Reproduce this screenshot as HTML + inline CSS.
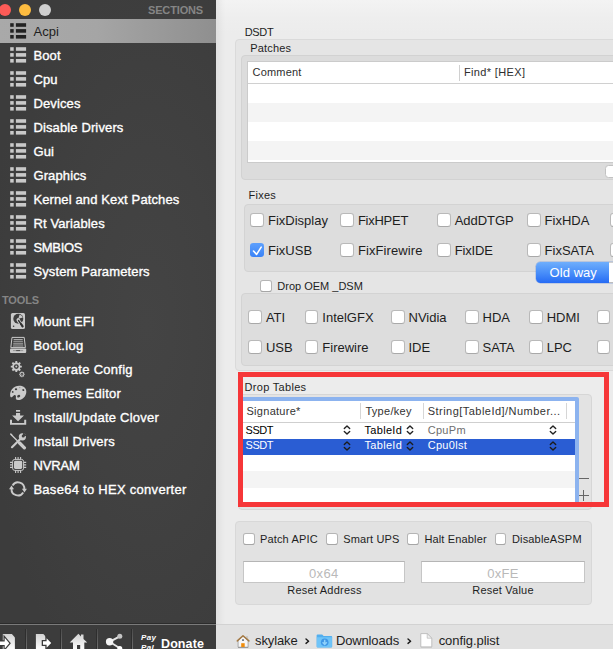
<!DOCTYPE html>
<html>
<head>
<meta charset="utf-8">
<title>Clover Configurator</title>
<style>
*{box-sizing:border-box;margin:0;padding:0}
html,body{width:613px;height:649px;overflow:hidden;background:#ececec;font-family:"Liberation Sans",sans-serif;}
#app{position:relative;width:613px;height:649px;overflow:hidden;background:linear-gradient(#f3f3f3 0px,#eeeeee 18px,#ececec 34px,#ececec 100%);}
.abs{position:absolute}
/* sidebar */
#side{position:absolute;left:0;top:0;width:216px;height:649px;background:radial-gradient(ellipse 75% 60% at 68% 50%,#444 0%,#414141 45%,#3c3c3c 100%);overflow:hidden}
.tl{position:absolute;width:12px;height:12px;border-radius:50%;top:4px}
.hdr{position:absolute;font-weight:bold;font-size:11px;color:#858585;letter-spacing:-0.15px;white-space:nowrap}
.row{position:absolute;left:0;width:216px;height:24px;}
.row .t{position:absolute;left:33.4px;top:1px;line-height:24px;font-size:13px;color:#fff;white-space:nowrap;-webkit-text-stroke:0.35px #fff;letter-spacing:0.13px}
.row.sel{background:linear-gradient(to right,#a9a9a9 0%,#a5a5a5 45%,#8f8f8f 100%)}
.row.sel .t{color:#1e1e1e;-webkit-text-stroke:0;letter-spacing:0.1px}
.li{position:absolute;left:10px;top:4px;width:16px;height:16px}
.ti{position:absolute;left:9px;top:3px;width:18px;height:18px}
/* main */
.box{position:absolute;background:#e4e4e4;border:1px solid #d9d9d9;border-radius:4px}
.cb{position:absolute;width:13.5px;height:13.5px;background:#fff;border:1px solid #b9b9b9;border-bottom-color:#a9a9a9;border-radius:3.2px}
.cb.ck{border:0;background:linear-gradient(#5da0fd,#3b83f7)}
.tx{position:absolute;white-space:nowrap}
.inp{background:#fff;border:1px solid #c6c6c6;border-top-color:#b5b5b5}
.cbs{position:absolute;width:11.5px;height:11.5px;background:#fff;border:1px solid #b5b5b5;border-bottom-color:#a6a6a6;border-radius:2.8px}
</style>
</head>
<body>
<div id="app">

<!-- MAIN -->
<div id="main">
  <div class="tx" style="left:244.7px;top:25.99px;font-size:11px;line-height:13px;color:#1e1e1e;letter-spacing:-0.3px;">DSDT</div>
  <div class="box" style="left:235px;top:39px;width:400px;height:332px;background:#e5e5e5;border-color:#dadada"></div>
  <div class="tx" style="left:250.3px;top:41.69px;font-size:11px;line-height:13px;color:#1e1e1e;letter-spacing:0.15px;">Patches</div>
  <div class="box" style="left:241px;top:55px;width:400px;height:124.5px;background:#dcdcdc;border-color:#d2d2d2"></div>
  <div class="abs" style="left:247px;top:61px;width:400px;height:102px;background:#fff;border:1px solid #cbcbcb;border-right:0"></div>
  <div class="abs" style="left:248px;top:103px;width:400px;height:19px;background:#f4f4f4"></div>
  <div class="abs" style="left:248px;top:141px;width:400px;height:19px;background:#f4f4f4"></div>
  <div class="abs" style="left:248px;top:83px;width:400px;height:1px;background:#d0d0d0"></div>
  <div class="abs" style="left:459px;top:64.5px;width:1px;height:16px;background:#d0d0d0"></div>
  <div class="tx" style="left:252.5px;top:65.89px;font-size:11px;line-height:13px;color:#2e2e2e;letter-spacing:0.2px;">Comment</div>
  <div class="tx" style="left:464px;top:65.89px;font-size:11px;line-height:13px;color:#2e2e2e;letter-spacing:0.35px;">Find* [HEX]</div>
  <div class="abs" style="left:604.5px;top:164.5px;width:30px;height:13px;background:#fff;border:1px solid #c2c2c2;border-radius:3.5px"></div>
  <div class="tx" style="left:248.6px;top:188.69px;font-size:11px;line-height:13px;color:#1e1e1e;letter-spacing:0.25px;">Fixes</div>
  <div class="box" style="left:244px;top:204px;width:400px;height:68px;background:#dddddd;border-color:#d3d3d3"></div>
  <div class="cb" style="left:250px;top:213.2px"></div>
  <div class="cb ck" style="left:250px;top:243.1px"><svg width="13.5" height="13.5" viewBox="0 0 13.5 13.5" style="position:absolute;left:-0.5px;top:-0.5px"><path d="M3.5 8 L6.6 11.4 L11.2 4.1" fill="none" stroke="#fff" stroke-width="1.6" stroke-linecap="round" stroke-linejoin="round"/></svg></div>
  <div class="tx" style="left:268.0px;top:213.20px;font-size:13px;line-height:16px;color:#1e1e1e;">FixDisplay</div>
  <div class="tx" style="left:268.0px;top:243.10px;font-size:13px;line-height:16px;color:#1e1e1e;">FixUSB</div>
  <div class="cb" style="left:340px;top:213.2px"></div>
  <div class="cb" style="left:340px;top:243.1px"></div>
  <div class="tx" style="left:357.9px;top:213.20px;font-size:13px;line-height:16px;color:#1e1e1e;letter-spacing:-0.25px;">FixHPET</div>
  <div class="tx" style="left:357.9px;top:243.10px;font-size:13px;line-height:16px;color:#1e1e1e;letter-spacing:0.1px;">FixFirewire</div>
  <div class="cb" style="left:437.3px;top:213.2px"></div>
  <div class="cb" style="left:437.3px;top:243.1px"></div>
  <div class="tx" style="left:454.7px;top:213.20px;font-size:13px;line-height:16px;color:#1e1e1e;letter-spacing:-0.05px;">AddDTGP</div>
  <div class="tx" style="left:454.7px;top:243.10px;font-size:13px;line-height:16px;color:#1e1e1e;letter-spacing:-0.15px;">FixIDE</div>
  <div class="cb" style="left:527.2px;top:213.2px"></div>
  <div class="cb" style="left:527.2px;top:243.1px"></div>
  <div class="tx" style="left:544.6px;top:213.20px;font-size:13px;line-height:16px;color:#1e1e1e;">FixHDA</div>
  <div class="tx" style="left:544.6px;top:243.10px;font-size:13px;line-height:16px;color:#1e1e1e;">FixSATA</div>
  <div class="cb" style="left:610px;top:213.2px"></div>
  <div class="cb" style="left:610px;top:243.1px"></div>
  <div class="abs" style="left:535.5px;top:262px;width:100px;height:21px;border-radius:4.5px 0 0 4.5px;background:linear-gradient(#6eaefc,#4a8ff9 50%,#266bf4);box-shadow:0 0 0 0.5px rgba(20,80,200,0.35)"></div>
  <div class="abs" style="left:608.5px;top:262px;width:10px;height:21px;background:#fff;border-top:1px solid #cfcfcf;border-bottom:1px solid #bdbdbd"></div>
  <div class="tx" style="left:549.6px;top:264.80px;font-size:13px;line-height:16px;color:#fff;letter-spacing:0.05px;">Old way</div>
  <div class="cbs" style="left:260px;top:280.3px"></div>
  <div class="tx" style="left:277.3px;top:279.69px;font-size:11px;line-height:13px;color:#1e1e1e;">Drop OEM _DSM</div>
  <div class="box" style="left:241px;top:293px;width:400px;height:73px;background:#dddddd;border-color:#d3d3d3"></div>
  <div class="cb" style="left:248.4px;top:310px"></div>
  <div class="cb" style="left:248.4px;top:340px"></div>
  <div class="tx" style="left:265.9px;top:310.30px;font-size:13px;line-height:16px;color:#1e1e1e;">ATI</div>
  <div class="tx" style="left:265.9px;top:340.30px;font-size:13px;line-height:16px;color:#1e1e1e;">USB</div>
  <div class="cb" style="left:304.8px;top:310px"></div>
  <div class="cb" style="left:304.8px;top:340px"></div>
  <div class="tx" style="left:322.3px;top:310.30px;font-size:13px;line-height:16px;color:#1e1e1e;">IntelGFX</div>
  <div class="tx" style="left:322.3px;top:340.30px;font-size:13px;line-height:16px;color:#1e1e1e;">Firewire</div>
  <div class="cb" style="left:391px;top:310px"></div>
  <div class="cb" style="left:391px;top:340px"></div>
  <div class="tx" style="left:408.5px;top:310.30px;font-size:13px;line-height:16px;color:#1e1e1e;">NVidia</div>
  <div class="tx" style="left:408.5px;top:340.30px;font-size:13px;line-height:16px;color:#1e1e1e;">IDE</div>
  <div class="cb" style="left:465px;top:310px"></div>
  <div class="cb" style="left:465px;top:340px"></div>
  <div class="tx" style="left:482.5px;top:310.30px;font-size:13px;line-height:16px;color:#1e1e1e;">HDA</div>
  <div class="tx" style="left:482.5px;top:340.30px;font-size:13px;line-height:16px;color:#1e1e1e;">SATA</div>
  <div class="cb" style="left:529.3px;top:310px"></div>
  <div class="cb" style="left:529.3px;top:340px"></div>
  <div class="tx" style="left:546.7px;top:310.30px;font-size:13px;line-height:16px;color:#1e1e1e;">HDMI</div>
  <div class="tx" style="left:546.7px;top:340.30px;font-size:13px;line-height:16px;color:#1e1e1e;">LPC</div>
  <div class="cb" style="left:596.5px;top:310px"></div>
  <div class="cb" style="left:596.5px;top:340px"></div>
  <div class="box" style="left:238px;top:394px;width:354px;height:116px;background:#e3e3e3;border-color:#d6d6d6"></div>
  <div class="tx" style="left:244.6px;top:380.69px;font-size:11px;line-height:13px;color:#1e1e1e;letter-spacing:0.3px;">Drop Tables</div>
  <div class="abs" style="left:240px;top:396.6px;width:339px;height:109.4px;background:#8cb3ef;border-radius:2px"></div>
  <div class="abs" style="left:243px;top:401px;width:332px;height:104px;background:#fff"></div>
  <div class="abs" style="left:243px;top:421.5px;width:332px;height:1px;background:#cfcfcf"></div>
  <div class="abs" style="left:360.0px;top:403px;width:1px;height:16px;background:#d6d6d6"></div>
  <div class="abs" style="left:423px;top:403px;width:1px;height:16px;background:#d6d6d6"></div>
  <div class="abs" style="left:565.8px;top:403px;width:1px;height:16px;background:#d6d6d6"></div>
  <div class="tx" style="left:246.5px;top:405.39px;font-size:11px;line-height:13px;color:#333;letter-spacing:0.28px;">Signature*</div>
  <div class="tx" style="left:365.4px;top:405.39px;font-size:11px;line-height:13px;color:#333;letter-spacing:0.3px;">Type/key</div>
  <div class="tx" style="left:427.7px;top:405.39px;font-size:11px;line-height:13px;color:#333;letter-spacing:0.47px;">String[TableId]/Number...</div>
  <div class="abs" style="left:243px;top:438.6px;width:332px;height:16.2px;background:#2a5dd3"></div>
  <div class="abs" style="left:243px;top:471px;width:332px;height:16.5px;background:#f4f4f4"></div>
  <div class="tx" style="left:245.6px;top:423.69px;font-size:11px;line-height:13px;color:#000;letter-spacing:-0.45px;">SSDT</div>
  <div class="tx" style="left:245.60px;top:439.29px;font-size:11px;line-height:13px;color:#fff;letter-spacing:-0.45px;">SSDT</div>
  <div class="tx" style="left:364.5px;top:423.69px;font-size:11px;line-height:13px;color:#000;letter-spacing:0.3px;">TableId</div>
  <div class="tx" style="left:364.50px;top:439.29px;font-size:11px;line-height:13px;color:#fff;letter-spacing:0.3px;">TableId</div>
  <div class="tx" style="left:427.7px;top:423.69px;font-size:11px;line-height:13px;color:#6e6e6e;letter-spacing:0.3px;">CpuPm</div>
  <div class="tx" style="left:427.70px;top:439.29px;font-size:11px;line-height:13px;color:#fff;letter-spacing:0.3px;">Cpu0lst</div>
  <div class="abs" style="left:425.4px;top:437px;width:121.5px;height:2.2px;background:#fff"></div><div class="abs" style="left:362px;top:437px;width:42px;height:1.8px;background:#fff"></div>
  <svg class="abs" style="left:342.7px;top:424.3px" width="8" height="12" viewBox="0 0 8 12"><path d="M1.3 4.6 L4 1.9 L6.7 4.6 M1.3 7.4 L4 10.1 L6.7 7.4" fill="none" stroke="#222" stroke-width="1.35" stroke-linecap="round" stroke-linejoin="round"/></svg>
  <svg class="abs" style="left:406px;top:424.3px" width="8" height="12" viewBox="0 0 8 12"><path d="M1.3 4.6 L4 1.9 L6.7 4.6 M1.3 7.4 L4 10.1 L6.7 7.4" fill="none" stroke="#222" stroke-width="1.35" stroke-linecap="round" stroke-linejoin="round"/></svg>
  <svg class="abs" style="left:549.3px;top:424.3px" width="8" height="12" viewBox="0 0 8 12"><path d="M1.3 4.6 L4 1.9 L6.7 4.6 M1.3 7.4 L4 10.1 L6.7 7.4" fill="none" stroke="#222" stroke-width="1.35" stroke-linecap="round" stroke-linejoin="round"/></svg>
  <svg class="abs" style="left:342.7px;top:439.8px" width="8" height="12" viewBox="0 0 8 12"><path d="M1.3 4.6 L4 1.9 L6.7 4.6 M1.3 7.4 L4 10.1 L6.7 7.4" fill="none" stroke="#1c1c1c" stroke-width="1.35" stroke-linecap="round" stroke-linejoin="round"/></svg>
  <svg class="abs" style="left:406px;top:439.8px" width="8" height="12" viewBox="0 0 8 12"><path d="M1.3 4.6 L4 1.9 L6.7 4.6 M1.3 7.4 L4 10.1 L6.7 7.4" fill="none" stroke="#1c1c1c" stroke-width="1.35" stroke-linecap="round" stroke-linejoin="round"/></svg>
  <svg class="abs" style="left:549.3px;top:439.8px" width="8" height="12" viewBox="0 0 8 12"><path d="M1.3 4.6 L4 1.9 L6.7 4.6 M1.3 7.4 L4 10.1 L6.7 7.4" fill="none" stroke="#1c1c1c" stroke-width="1.35" stroke-linecap="round" stroke-linejoin="round"/></svg>
  <div class="abs" style="left:578.5px;top:478px;width:10.5px;height:1px;background:#666"></div>
  <div class="abs" style="left:578.5px;top:495px;width:10.5px;height:1px;background:#666"></div>
  <div class="abs" style="left:583.2px;top:490px;width:1px;height:11px;background:#666"></div>
  <div class="abs" style="left:238px;top:372px;width:371px;height:135px;border:5px solid #f63638"></div>
  <div class="box" style="left:235px;top:521px;width:357px;height:83.5px;background:#e2e2e2;border-color:#d8d8d8"></div>
  <div class="cbs" style="left:243px;top:533.4px"></div>
  <div class="tx" style="left:260px;top:532.69px;font-size:11px;line-height:13px;color:#1e1e1e;letter-spacing:0.15px;">Patch APIC</div>
  <div class="cbs" style="left:326px;top:533.4px"></div>
  <div class="tx" style="left:343.2px;top:532.69px;font-size:11px;line-height:13px;color:#1e1e1e;letter-spacing:0.15px;">Smart UPS</div>
  <div class="cbs" style="left:407.4px;top:533.4px"></div>
  <div class="tx" style="left:424.4px;top:532.69px;font-size:11px;line-height:13px;color:#1e1e1e;letter-spacing:0.15px;">Halt Enabler</div>
  <div class="cbs" style="left:494.6px;top:533.4px"></div>
  <div class="tx" style="left:511.9px;top:532.69px;font-size:11px;line-height:13px;color:#1e1e1e;letter-spacing:0.18px;">DisableASPM</div>
  <div class="abs inp" style="left:243px;top:561px;width:161.5px;height:21.5px"></div>
  <div class="abs inp" style="left:421px;top:561px;width:164px;height:21.5px"></div>
  <div class="tx" style="left:243.00px;top:565.90px;font-size:13px;line-height:16px;color:#b9b9b9;letter-spacing:0.3px;width:161.5px;text-align:center;">0x64</div>
  <div class="tx" style="left:421.00px;top:565.90px;font-size:13px;line-height:16px;color:#b9b9b9;letter-spacing:0.3px;width:164px;text-align:center;">0xFE</div>
  <div class="tx" style="left:243.00px;top:584.29px;font-size:11px;line-height:13px;color:#1e1e1e;letter-spacing:0.22px;width:163px;text-align:center;">Reset Address</div>
  <div class="tx" style="left:421.00px;top:584.29px;font-size:11px;line-height:13px;color:#1e1e1e;letter-spacing:0.22px;width:164px;text-align:center;">Reset Value</div>
  <div class="abs" style="left:216px;top:624px;width:397px;height:25px;background:#e1e1e1;border-top:1px solid #d2d2d2"></div>
  <div class="tx" style="left:255.10px;top:633.40px;font-size:13px;line-height:16px;color:#1e1e1e;letter-spacing:-0.12px;">skylake</div>
  <div class="tx" style="left:335.90px;top:633.40px;font-size:13px;line-height:16px;color:#1e1e1e;letter-spacing:-0.13px;">Downloads</div>
  <div class="tx" style="left:438.70px;top:633.40px;font-size:13px;line-height:16px;color:#1e1e1e;letter-spacing:-0.07px;">config.plist</div>
  <svg class="abs" style="left:305.0px;top:638px" width="5" height="7" viewBox="0 0 5 7"><path d="M1 1 L3.6 3.2 L1 5.4" fill="none" stroke="#1a1a1a" stroke-width="1.4" stroke-linecap="round" stroke-linejoin="round"/></svg>
  <svg class="abs" style="left:407.3px;top:638px" width="5" height="7" viewBox="0 0 5 7"><path d="M1 1 L3.6 3.2 L1 5.4" fill="none" stroke="#1a1a1a" stroke-width="1.4" stroke-linecap="round" stroke-linejoin="round"/></svg>
  <svg class="abs" style="left:235px;top:634px" width="16" height="15" viewBox="0 0 16 15">
  <path d="M11.4 2.6 H12.6 V5.2 H11.4 Z" fill="#e8e8e8" stroke="#aaa" stroke-width="0.5"/>
  <path d="M3.1 6.4 L8 2.2 L13.1 6.4 V13.2 H3.1 Z" fill="#f6f6f6" stroke="#9a9a9a" stroke-width="0.8"/>
  <path d="M2.3 6.9 L8 1.7 L13.9 6.9" fill="none" stroke="#a57a44" stroke-width="1.5" stroke-linecap="round" stroke-linejoin="round"/>
  <rect x="6.2" y="9.2" width="3.5" height="3.9" fill="#f18d0c"/>
  <rect x="7.2" y="5.3" width="1.6" height="1.6" fill="#4a5260"/>
  <path d="M3 13.5 H13.2" stroke="#8c8c8c" stroke-width="0.7"/>
</svg>
  <svg class="abs" style="left:315.5px;top:634px" width="17" height="14" viewBox="0 0 17 14">
  <path d="M0.6 1.4 Q0.6 0.4 1.6 0.4 H6.2 L7.6 1.9 H15.2 Q16.2 1.9 16.2 2.9 V12.6 Q16.2 13.6 15.2 13.6 H1.6 Q0.6 13.6 0.6 12.6 Z" fill="#52aeee"/>
  <path d="M0.9 3.2 H15.9 V12.5 Q15.9 13.3 15.1 13.3 H1.7 Q0.9 13.3 0.9 12.5 Z" fill="#6fc4f8"/>
  <circle cx="8.7" cy="8.2" r="3.8" fill="#3f97e6"/>
  <path d="M8.7 5.8 V9.4 M6.6 8.2 L8.7 10.5 L10.8 8.2" fill="none" stroke="#8fd2fb" stroke-width="1.5"/>
</svg>
  <svg class="abs" style="left:420px;top:633.4px" width="13" height="15" viewBox="0 0 13 15">
  <path d="M0.8 0.6 H7.2 L11.8 5.2 V13.9 H0.8 Z" fill="#fff" stroke="#b4b4b4" stroke-width="0.8"/>
  <path d="M7.2 0.6 V5.2 H11.8 Z" fill="#f0f0f0" stroke="#b9b9b9" stroke-width="0.7" stroke-linejoin="round"/>
  <path d="M0.8 14.3 H11.8" stroke="#bdbdbd" stroke-width="0.6"/>
</svg>
</div>

<div class="abs" style="left:216px;top:0;width:9px;height:624px;background:linear-gradient(to right,rgba(0,0,0,0.05),rgba(0,0,0,0))"></div>
<!-- SIDEBAR -->
<div id="side">
  <div class="tl" style="left:-1px;background:#fc5b57"></div>
  <div class="tl" style="left:19px;background:#fdbc40"></div>
  <div class="tl" style="left:39px;background:#cfcfcf"></div>
  <div class="hdr" style="left:148px;top:4px;">SECTIONS</div>
  <svg width="0" height="0" style="position:absolute">
    <defs>
      <symbol id="i-list" viewBox="0 0 17 16">
        <rect x="0.2" y="0.2" width="3.5" height="3.6"/><rect x="5.9" y="0.2" width="10.2" height="3.6"/>
        <rect x="0.2" y="6.1" width="3.5" height="3.6"/><rect x="5.9" y="6.1" width="10.2" height="3.6"/>
        <rect x="0.2" y="12" width="3.5" height="3.6"/><rect x="5.9" y="12" width="10.2" height="3.6"/>
      </symbol>

      <symbol id="i-efi" viewBox="0 0 18 18">
        <rect x="1.9" y="1" width="14.1" height="16" rx="1.6" fill="#cacaca"/>
        <circle cx="9.3" cy="6.8" r="5" fill="#3e3e3e"/>
        <path d="M9.3 6.8 L10.6 2.4 A5 5 0 0 1 13.9 5.6 Z" fill="#cacaca"/>
        <circle cx="9.2" cy="7.4" r="1.5" fill="#cacaca"/>
        <path d="M9.2 8.2 L13.6 14.2" stroke="#cacaca" stroke-width="3.2" stroke-linecap="round"/>
        <path d="M9.6 8.6 L13.5 14.2" stroke="#333" stroke-width="1.5" stroke-linecap="round"/>
        <path d="M12 12 L13.6 14.3" stroke="#333" stroke-width="2.1" stroke-linecap="round"/>
        <circle cx="4.6" cy="14.3" r="0.8" fill="#3e3e3e"/>
      </symbol>
      <symbol id="i-log" viewBox="0 0 18 18">
        <path d="M3 1.4 L15.2 1.4 L16.4 11.6 L1.8 11.6 Z" fill="none" stroke="#cacaca" stroke-width="1"/>
        <path d="M4.6 3.6H13.7 M4.4 5.7H13.9 M4.2 7.9H14.1 M4 10H14.3" stroke="#a8a8a8" stroke-width="1.1" fill="none"/>
        <rect x="1" y="12.4" width="16.2" height="4.7" rx="1" fill="#cacaca"/>
        <path d="M4 14.6H14.2" stroke="#8a8a8a" stroke-width="0.8"/>
        <path d="M7.2 14.6H11" stroke="#4a4a4a" stroke-width="1"/>
      </symbol>
      <symbol id="i-gear" viewBox="0 0 18 18">
        <path d="M12.82 5.68 L12.82 7.52 L11.39 7.55 L10.86 8.82 L11.86 9.86 L10.56 11.16 L9.52 10.16 L8.25 10.69 L8.22 12.12 L6.38 12.12 L6.35 10.69 L5.08 10.16 L4.04 11.16 L2.74 9.86 L3.74 8.82 L3.21 7.55 L1.78 7.52 L1.78 5.68 L3.21 5.65 L3.74 4.38 L2.74 3.34 L4.04 2.04 L5.08 3.04 L6.35 2.51 L6.38 1.08 L8.22 1.08 L8.25 2.51 L9.52 3.04 L10.56 2.04 L11.86 3.34 L10.86 4.38 L11.39 5.65Z" fill="#cacaca"/>
        <circle cx="7.3" cy="6.6" r="2.4" fill="#3e3e3e"/>
        <circle cx="7.3" cy="6.6" r="1" fill="#cacaca"/>
        <path d="M15.75 13.84 L15.75 14.86 L15.04 14.87 L14.78 15.49 L15.28 16.01 L14.56 16.73 L14.04 16.23 L13.42 16.49 L13.41 17.20 L12.39 17.20 L12.38 16.49 L11.76 16.23 L11.24 16.73 L10.52 16.01 L11.02 15.49 L10.76 14.87 L10.05 14.86 L10.05 13.84 L10.76 13.83 L11.02 13.21 L10.52 12.69 L11.24 11.97 L11.76 12.47 L12.38 12.21 L12.39 11.50 L13.41 11.50 L13.42 12.21 L14.04 12.47 L14.56 11.97 L15.28 12.69 L14.78 13.21 L15.04 13.83Z" fill="#cacaca"/>
        <circle cx="12.9" cy="14.35" r="1.3" fill="#3e3e3e"/>
        <circle cx="12.9" cy="14.35" r="0.6" fill="#9a9a9a"/>
      </symbol>
      <symbol id="i-pal" viewBox="0 0 18 18">
        <path d="M10 1.8 C14.5 1.6 17.6 4.4 17.3 8.2 C17 12.8 13 16.2 9 16 C7 15.9 6.6 14.6 6.9 13.2 C7.2 11.6 6.2 10.6 4.8 11.4 C3.6 12.1 2.6 14.2 1.6 13 C0.4 10.6 1.6 6.2 4.4 3.8 C6 2.5 8 1.9 10 1.8 Z" fill="#cacaca"/>
        <ellipse cx="7" cy="5.3" rx="1.2" ry="1" fill="#3e3e3e"/>
        <ellipse cx="14.3" cy="6" rx="1.1" ry="1" fill="#3e3e3e" transform="rotate(30 14.3 6)"/>
        <circle cx="3.7" cy="7.9" r="0.9" fill="#3e3e3e"/>
        <circle cx="10.8" cy="3.6" r="0.6" fill="#8a8a8a"/>
        <ellipse cx="9.7" cy="12.2" rx="1.6" ry="1.2" fill="#3e3e3e" transform="rotate(-25 9.7 12.2)"/>
      </symbol>
      <symbol id="i-inst" viewBox="0 0 18 18">
        <rect x="7" y="2" width="4.1" height="1.7" fill="#cacaca"/>
        <path d="M7 5 H11.1 V7.6 H15 L9.05 13.2 L3.1 7.6 H7 Z" fill="#cacaca"/>
        <path d="M1 11.8 H3 V14.9 H15.2 V11.8 H17.2 V16.8 H1 Z" fill="#cacaca"/>
      </symbol>
      <symbol id="i-tool" viewBox="0 0 18 18">
        <path d="M1.8 2.2 L9.3 9.8" stroke="#cacaca" stroke-width="1.3" stroke-linecap="round"/>
        <path d="M1.3 1.3 L3 1.9 L3.6 3.6 L2.6 3.4 L1.6 2.6Z" fill="#cacaca"/>
        <path d="M10.6 11 L15.4 15.8" stroke="#cacaca" stroke-width="3.3" stroke-linecap="round"/>
        <path d="M11.6 6.8 L3 15.2" stroke="#cacaca" stroke-width="2.2" stroke-linecap="round"/>
        <circle cx="13.4" cy="4.8" r="3.6" fill="#cacaca"/>
        <path d="M13.2 5 L14.4 0.6 L17.6 3.8 Z" fill="#3e3e3e"/>
        <circle cx="14.2" cy="4" r="1.5" fill="#3e3e3e"/>
      </symbol>
      <symbol id="i-chip" viewBox="0 0 18 18">
        <rect x="3.6" y="3.4" width="11" height="11" rx="2.2" fill="none" stroke="#cacaca" stroke-width="1"/>
        <rect x="5" y="4.8" width="8.2" height="8.2" rx="1.4" fill="#cacaca"/>
        <path d="M6.6 1V3.2 M9.1 1V3.2 M11.6 1V3.2 M6.6 14.6V17 M9.1 14.6V17 M11.6 14.6V17 M1 6.4H3.4 M1 8.9H3.4 M1 11.4H3.4 M14.8 6.4H17.2 M14.8 8.9H17.2 M14.8 11.4H17.2" stroke="#cacaca" stroke-width="1.1" fill="none"/>
      </symbol>
      <symbol id="i-sync" viewBox="0 0 18 18">
        <path d="M3.6 5.4 A6.3 6.3 0 0 1 15.3 9" fill="none" stroke="#cacaca" stroke-width="1.9"/>
        <path d="M14.2 12.4 A6.3 6.3 0 0 1 2.5 9" fill="none" stroke="#cacaca" stroke-width="1.9"/>
        <path d="M12.9 8.7 H17.9 L15.5 12.4 Z" fill="#cacaca"/>
        <path d="M0 9.3 H5 L2.5 5.6 Z" fill="#cacaca"/>
      </symbol>
    </defs>
  </svg>
  <div class="row sel" style="top:19px"><svg class="li" style="width:17px" fill="#222"><use href="#i-list"/></svg><span class="t">Acpi</span></div>
  <div class="row" style="top:43px"><svg class="li" style="width:17px" fill="#c9c9c9"><use href="#i-list"/></svg><span class="t">Boot</span></div>
  <div class="row" style="top:67px"><svg class="li" style="width:17px" fill="#c9c9c9"><use href="#i-list"/></svg><span class="t">Cpu</span></div>
  <div class="row" style="top:91px"><svg class="li" style="width:17px" fill="#c9c9c9"><use href="#i-list"/></svg><span class="t">Devices</span></div>
  <div class="row" style="top:115px"><svg class="li" style="width:17px" fill="#c9c9c9"><use href="#i-list"/></svg><span class="t">Disable Drivers</span></div>
  <div class="row" style="top:139px"><svg class="li" style="width:17px" fill="#c9c9c9"><use href="#i-list"/></svg><span class="t">Gui</span></div>
  <div class="row" style="top:163px"><svg class="li" style="width:17px" fill="#c9c9c9"><use href="#i-list"/></svg><span class="t">Graphics</span></div>
  <div class="row" style="top:187px"><svg class="li" style="width:17px" fill="#c9c9c9"><use href="#i-list"/></svg><span class="t">Kernel and Kext Patches</span></div>
  <div class="row" style="top:211px"><svg class="li" style="width:17px" fill="#c9c9c9"><use href="#i-list"/></svg><span class="t">Rt Variables</span></div>
  <div class="row" style="top:235px"><svg class="li" style="width:17px" fill="#c9c9c9"><use href="#i-list"/></svg><span class="t" style="letter-spacing:-0.3px">SMBIOS</span></div>
  <div class="row" style="top:259px"><svg class="li" style="width:17px" fill="#c9c9c9"><use href="#i-list"/></svg><span class="t">System Parameters</span></div>
  <div class="hdr" style="left:2px;top:294px;">TOOLS</div>
  <div class="row" style="top:309px"><svg class="ti" viewBox="0 0 18 18" fill="#c9c9c9"><use href="#i-efi"/></svg><span class="t">Mount EFI</span></div>
  <div class="row" style="top:333px"><svg class="ti" viewBox="0 0 18 18" fill="#c9c9c9"><use href="#i-log"/></svg><span class="t" style="letter-spacing:0.3px">Boot.log</span></div>
  <div class="row" style="top:357px"><svg class="ti" viewBox="0 0 18 18" fill="#c9c9c9"><use href="#i-gear"/></svg><span class="t" style="letter-spacing:0.27px">Generate Config</span></div>
  <div class="row" style="top:381px"><svg class="ti" viewBox="0 0 18 18" fill="#c9c9c9"><use href="#i-pal"/></svg><span class="t" style="letter-spacing:0.24px">Themes Editor</span></div>
  <div class="row" style="top:405px"><svg class="ti" viewBox="0 0 18 18" fill="#c9c9c9"><use href="#i-inst"/></svg><span class="t" style="letter-spacing:0.24px">Install/Update Clover</span></div>
  <div class="row" style="top:429px"><svg class="ti" viewBox="0 0 18 18" fill="#c9c9c9"><use href="#i-tool"/></svg><span class="t" style="letter-spacing:0.19px">Install Drivers</span></div>
  <div class="row" style="top:453px"><svg class="ti" viewBox="0 0 18 18" fill="#c9c9c9"><use href="#i-chip"/></svg><span class="t" style="letter-spacing:-0.1px">NVRAM</span></div>
  <div class="row" style="top:477px"><svg class="ti" viewBox="0 0 18 18" fill="#c9c9c9"><use href="#i-sync"/></svg><span class="t" style="letter-spacing:0.28px">Base64 to HEX converter</span></div>
  <div class="abs" style="left:0;top:623px;width:216px;height:26px;background:#3c3c3c;border-top:1px solid #2c2c2c"></div>
  <div class="abs" style="left:0;top:624px;width:216px;height:1px;background:#7a7a7a"></div>
  <div class="abs" style="left:24.5px;top:629px;width:1px;height:20px;background:#2e2e2e"></div>
  <div class="abs" style="left:25.5px;top:629px;width:1px;height:20px;background:linear-gradient(#4c4c4c,#6e6e6e)"></div>
  <div class="abs" style="left:60px;top:629px;width:1px;height:20px;background:#2e2e2e"></div>
  <div class="abs" style="left:61px;top:629px;width:1px;height:20px;background:linear-gradient(#4c4c4c,#6e6e6e)"></div>
  <div class="abs" style="left:95.8px;top:629px;width:1px;height:20px;background:#2e2e2e"></div>
  <div class="abs" style="left:96.8px;top:629px;width:1px;height:20px;background:linear-gradient(#4c4c4c,#6e6e6e)"></div>
  <div class="abs" style="left:130.8px;top:629px;width:1px;height:20px;background:#2e2e2e"></div>
  <div class="abs" style="left:131.8px;top:629px;width:1px;height:20px;background:linear-gradient(#4c4c4c,#6e6e6e)"></div>
  <svg class="abs" style="left:0;top:632px" width="216" height="17" viewBox="0 632 216 17">
  <defs><linearGradient id="wg" x1="0" y1="0" x2="0" y2="1"><stop offset="0" stop-color="#d2d2d2"/><stop offset="1" stop-color="#ffffff"/></linearGradient></defs>
  <!-- import -->
  <path d="M2.8 634 H11.9 L14.9 637.4 V650 H2.8 Z" fill="url(#wg)"/>
  <path d="M-2 641.4 H4.7 V637.7 L9.3 643.2 L4.7 648.7 V645.1 H-2 Z" fill="#fff" stroke="#3a3a3a" stroke-width="2.4" paint-order="stroke"/>
  <!-- export -->
  <path d="M35.9 634 H43.4 L46.5 637.4 V650 H35.9 Z" fill="url(#wg)"/>
  <path d="M43 641.3 H46.6 V638.2 L51.2 643 L46.6 647.8 V644.8 H43 Z" fill="#fff" stroke="#3a3a3a" stroke-width="2.6" paint-order="stroke"/>
  <!-- home -->
  <path d="M78.4 633.8 L81 636.4 V634.6 H83.5 V638.9 L87.2 642.6 H84.3 V650 H80.2 V645 H77 V650 H73 V642.6 H69.7 Z" fill="url(#wg)"/>
  <!-- share -->
  <path d="M109.6 641.8 L119.8 636.3 M109.6 641.8 L119.8 648.2" stroke="#e6e6e6" stroke-width="1.9" fill="none"/>
  <circle cx="109.6" cy="641.8" r="3.7" fill="#f4f4f4"/>
  <circle cx="119.8" cy="636.3" r="2.5" fill="#c4c4c4"/>
  <circle cx="119.8" cy="648.6" r="2.5" fill="#fff"/>
</svg>
  <div class="tx" style="left:141.00px;top:632.73px;font-size:8px;line-height:10px;color:#fff;letter-spacing:0.3px;font-weight:bold;font-style:italic;">Pay</div>
  <div class="tx" style="left:141.00px;top:643.23px;font-size:8px;line-height:10px;color:#fff;letter-spacing:0.3px;font-weight:bold;font-style:italic;">Pal</div>
  <div class="tx" style="left:161.00px;top:637.17px;font-size:12.5px;line-height:15px;color:#fff;letter-spacing:0.1px;font-weight:bold;">Donate</div>
</div>

</div>
</body>
</html>
